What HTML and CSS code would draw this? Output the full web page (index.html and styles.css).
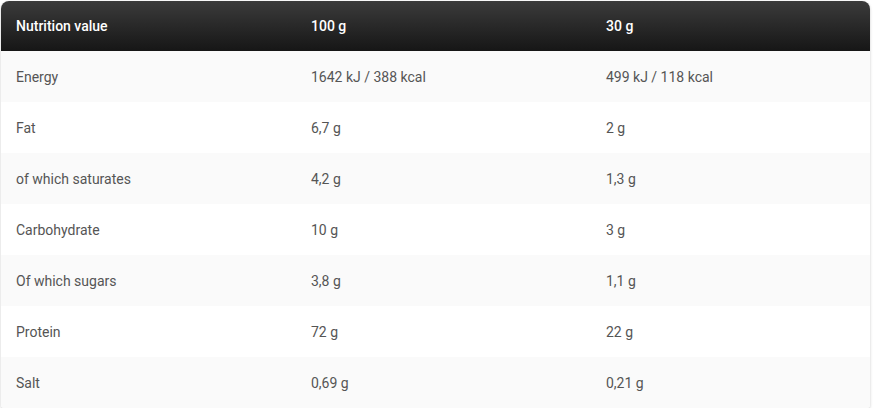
FILE: index.html
```html
<!DOCTYPE html>
<html>
<head>
<meta charset="utf-8">
<link rel="stylesheet" href="styles.css">
</head>
<body>
<div class="card">
  <table class="nutri">
    <thead>
      <tr><th class="c1">Nutrition value</th><th class="c2">100 g</th><th class="c3">30 g</th></tr>
    </thead>
    <tbody>
      <tr><td>Energy</td><td>1642 kJ / 388 kcal</td><td>499 kJ / 118 kcal</td></tr>
      <tr><td>Fat</td><td>6,7 g</td><td>2 g</td></tr>
      <tr><td>of which saturates</td><td>4,2 g</td><td>1,3 g</td></tr>
      <tr><td>Carbohydrate</td><td>10 g</td><td>3 g</td></tr>
      <tr><td>Of which sugars</td><td>3,8 g</td><td>1,1 g</td></tr>
      <tr><td>Protein</td><td>72 g</td><td>22 g</td></tr>
      <tr><td>Salt</td><td>0,69 g</td><td>0,21 g</td></tr>
    </tbody>
  </table>
</div>
</body>
</html>
```
FILE: styles.css
```css
html, body { margin: 0; padding: 0; background: #ffffff; }
body { font-family: Roboto, "Liberation Sans", sans-serif; }
.card {
  width: 869px;
  margin: 1px 0 0 1px;
  border-radius: 8px 8px 3px 3px;
  box-shadow: 0 1px 3px rgba(0,0,0,0.22);
  overflow: hidden;
}
.nutri { width: 100%; border-collapse: collapse; table-layout: fixed; }
.nutri th, .nutri td { height: 51px; padding: 0 0 0 15px; text-align: left; box-sizing: border-box; }
.nutri th {
  background: linear-gradient(#3b3b3b, #161616);
  color: #ffffff;
  font-weight: 500;
  font-size: 14px;
  height: 50px;
}
.c1, .c2 { width: 295px; }
.nutri td { color: #555555; font-size: 14px; font-weight: 400; }
.nutri tbody tr:nth-child(odd) td { background: #fafafa; }
.nutri tbody tr:nth-child(even) td { background: #ffffff; }
```
